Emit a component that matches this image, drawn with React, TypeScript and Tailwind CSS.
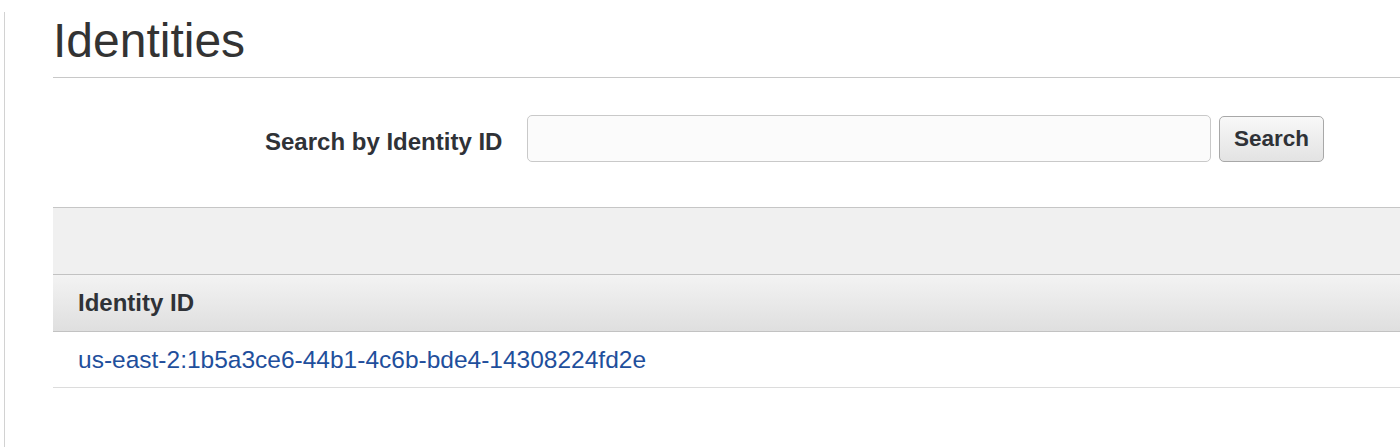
export default function App() {
  return (
    <div
      className="flex h-[447px] w-[1400px] overflow-hidden bg-white pl-[4px] text-[#333]"
      style={{ fontFamily: '"Liberation Sans", Helvetica, Arial, sans-serif' }}
    >
      <div className="mt-[12px] w-px shrink-0 bg-[#d2d2d2]" />

      <main className="ml-[48px] min-w-0 flex-1">
        <h1 className="border-b border-[#c8c8c8] pt-[17px] pb-[12px] text-[48px] leading-[48px] font-normal text-[#333]">
          Identities
        </h1>

        <form
          className="mt-[37px] flex items-center pl-[212px]"
          onSubmit={(e) => e.preventDefault()}
        >
          <label
            htmlFor="identity-search"
            className="mt-[7px] w-[235px] text-[24px] leading-[28px] font-bold whitespace-nowrap text-[#2f3237]"
          >
            Search by Identity ID
          </label>
          <input
            id="identity-search"
            type="text"
            className="ml-[27px] h-[47px] w-[684px] rounded-[5px] border border-[#c9c9c9] bg-[#fbfbfb] px-3 text-[22px] outline-none"
          />
          <button
            type="submit"
            className="ml-[8px] h-[46px] w-[105px] rounded-[5px] border border-[#a8a8a8] bg-gradient-to-b from-[#f8f8f8] to-[#e3e3e3] text-[22.5px] font-bold text-[#2f3237]"
          >
            Search
          </button>
        </form>

        <section className="mt-[45px]">
          <div className="h-[67px] border-t border-[#c6c6c6] bg-[#f0f0f0]" />
          <div className="flex h-[58px] items-center border-y border-[#c2c2c2] bg-gradient-to-b from-[#f3f3f3] to-[#dfdfdf] pl-[25px]">
            <span className="text-[24px] leading-[28px] font-bold text-[#2f3237]">Identity ID</span>
          </div>
          <div className="flex h-[56px] items-center border-b border-[#dcdcdc] pl-[25px]">
            <a href="#" className="text-[24.5px] leading-[28px] text-[#1f4f9c]">
              us-east-2:1b5a3ce6-44b1-4c6b-bde4-14308224fd2e
            </a>
          </div>
        </section>
      </main>
    </div>
  );
}
